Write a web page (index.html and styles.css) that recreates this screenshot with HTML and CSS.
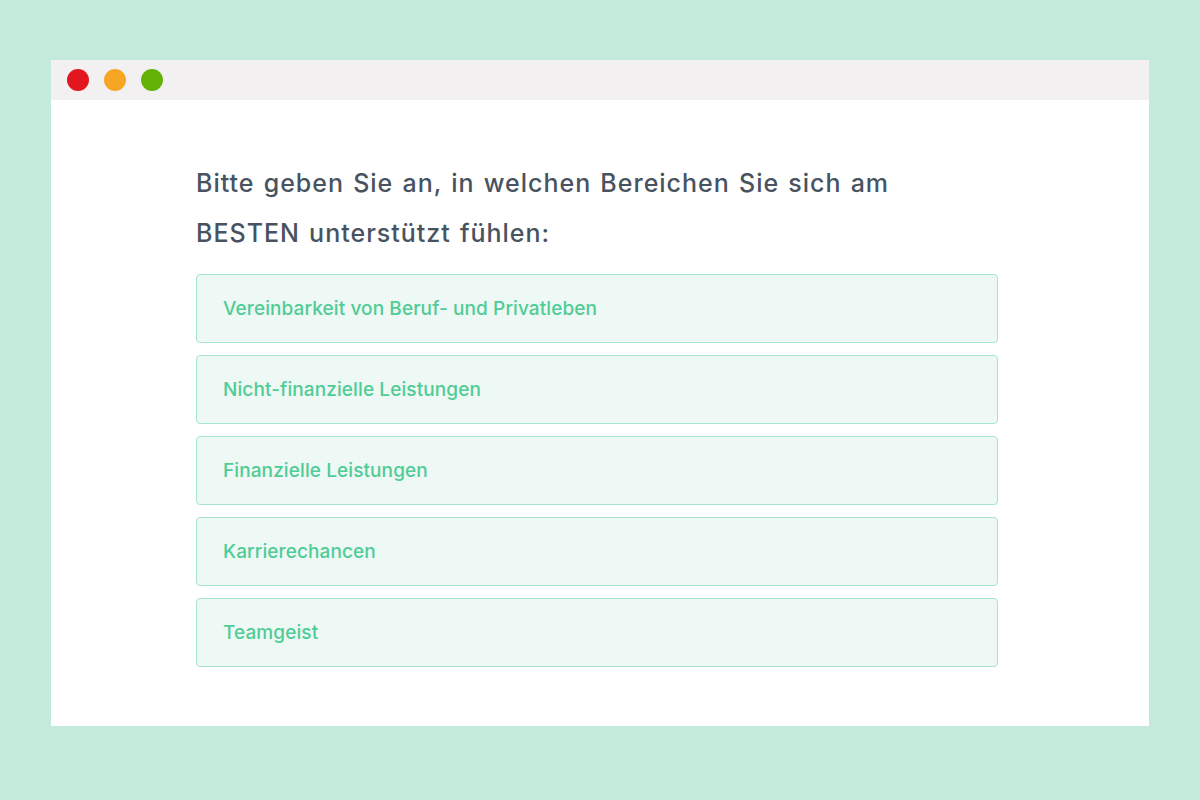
FILE: index.html
```html
<!DOCTYPE html>
<html>
<head>
    <title>Umfrage</title>
    <link rel="stylesheet" href="styles.css">
</head>
<body>
    <div class="window">
        <div class="titlebar">
            <span class="dot red"></span>
            <span class="dot orange"></span>
            <span class="dot green"></span>
        </div>
        <div class="content">
            <h1 class="question">Bitte geben Sie an, in welchen Bereichen Sie sich am BESTEN unterstützt fühlen:</h1>
            <div class="options">
                <div class="option">Vereinbarkeit von Beruf- und Privatleben</div>
                <div class="option">Nicht-finanzielle Leistungen</div>
                <div class="option">Finanzielle Leistungen</div>
                <div class="option">Karrierechancen</div>
                <div class="option">Teamgeist</div>
            </div>
        </div>
    </div>
</body>
</html>
```

FILE: styles.css
```css
html, body{
    margin: 0;
    padding: 0;
}
body{
    background: #C4EADC;
    padding: 60px 51px 74px 51px;
    font-family: "Inter", "Liberation Sans", sans-serif;
}
.window{
    background: #FFF;
    height: 666px;
}
.titlebar{
    height: 40px;
    background: #F2F0F1;
    display: flex;
    align-items: center;
    gap: 15px;
    padding-left: 16px;
}
.dot{
    width: 22px;
    height: 22px;
    border-radius: 50%;
}
.dot.red{ background: #E2161F; }
.dot.orange{ background: #F6A623; }
.dot.green{ background: #62B208; }
.content{
    padding: 58px 151px 0 145px;
}
.question{
    margin: 0 0 16px 0;
    font-size: 25px;
    line-height: 50px;
    font-weight: 500;
    letter-spacing: 1px;
    word-spacing: 1.5px;
    color: #48535F;
    width: 720px;
}
.options{
    display: flex;
    flex-direction: column;
    gap: 12px;
}
.option{
    height: 67px;
    box-sizing: content-box;
    display: flex;
    align-items: center;
    padding: 0 26px;
    background: #EEF8F4;
    border: 1px solid #A6E6CC;
    border-radius: 4px;
    color: #50CC96;
    font-size: 19px;
    font-weight: 500;
    letter-spacing: 0.1px;
}
```
